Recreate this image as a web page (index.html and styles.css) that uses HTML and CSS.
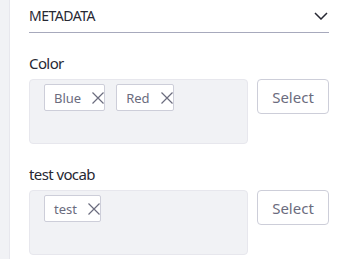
FILE: index.html
```html
<!DOCTYPE html>
<html lang="en">
<head>
    <meta charset="UTF-8">
    <meta name="viewport" content="width=device-width, initial-scale=1.0">
    <title>Metadata</title>
    <link rel="stylesheet" href="styles.css">
</head>
<body>
    <div class="layout">
        <div class="side-strip"></div>
        <div class="panel">
            <!-- section header -->
            <div class="panel-header">
                <span class="panel-title">METADATA</span>
                <svg class="chevron" width="14" height="8" viewBox="0 0 14 8">
                    <path d="M1 1 L7 7 L13 1" fill="none" stroke="#272833" stroke-width="1.5"/>
                </svg>
            </div>

            <div class="field-group">
                <div class="field-label">Color</div>
                <div class="field-row">
                    <div class="tag-box">
                        <span class="tag">Blue
                            <svg class="tag-x" width="12" height="12" viewBox="0 0 12 12"><path d="M0.5 0.5 L11.5 11.5 M11.5 0.5 L0.5 11.5" stroke="#6b6c7e" stroke-width="1.2"/></svg>
                        </span>
                        <span class="tag">Red
                            <svg class="tag-x" width="12" height="12" viewBox="0 0 12 12"><path d="M0.5 0.5 L11.5 11.5 M11.5 0.5 L0.5 11.5" stroke="#6b6c7e" stroke-width="1.2"/></svg>
                        </span>
                    </div>
                    <button class="select-btn">Select</button>
                </div>
            </div>

            <div class="field-group">
                <div class="field-label">test vocab</div>
                <div class="field-row">
                    <div class="tag-box">
                        <span class="tag">test
                            <svg class="tag-x" width="12" height="12" viewBox="0 0 12 12"><path d="M0.5 0.5 L11.5 11.5 M11.5 0.5 L0.5 11.5" stroke="#6b6c7e" stroke-width="1.2"/></svg>
                        </span>
                    </div>
                    <button class="select-btn">Select</button>
                </div>
            </div>
        </div>
    </div>
</body>
</html>
```

FILE: styles.css
```css
body {
    font-family: 'Noto Sans', Arial, sans-serif;
    background-color: white;
    color: #272833;
    margin: 0;
    padding: 0;
}
.layout {
    display: flex;
    min-height: 259px;
}
.side-strip {
    width: 9px;
    background-color: #f1f2f5;
    border-right: 1px solid #e7e7ed;
}
.panel {
    flex: 1;
    padding: 0 18px 0 19px;
}
.panel-header {
    display: flex;
    align-items: center;
    justify-content: space-between;
    padding: 6px 0;
    line-height: 20px;
    border-bottom: 1px solid #a7a9bc;
}
.panel-title {
    font-size: 14px;
    letter-spacing: -0.5px;
}
.chevron {
    display: block;
    margin-right: 1px;
}
.field-group {
    margin-top: 20px;
}
.field-label {
    font-size: 15px;
    letter-spacing: -0.6px;
    line-height: 20px;
    margin-bottom: 6px;
}
.field-row {
    display: flex;
    align-items: flex-start;
    gap: 9px;
}
.tag-box {
    flex: 1;
    height: 65px;
    box-sizing: border-box;
    background-color: #f1f2f5;
    border: 1px solid #e7e7ed;
    border-radius: 4px;
    padding: 4px 14px;
    display: flex;
    align-items: flex-start;
    gap: 11px;
}
.tag {
    display: inline-flex;
    align-items: center;
    height: 27px;
    box-sizing: border-box;
    padding: 0 0 0 9px;
    background: white;
    border: 1px solid #cdced9;
    border-radius: 2px;
    font-size: 13px;
    color: #6b6c7e;
}
.tag-x {
    margin-left: 11px;
}
.select-btn {
    width: 72px;
    height: 35px;
    background: white;
    border: 1px solid #cdced9;
    border-radius: 4px;
    font-family: inherit;
    font-size: 15px;
    color: #6b6c7e;
    padding: 0;
    cursor: pointer;
}
```
